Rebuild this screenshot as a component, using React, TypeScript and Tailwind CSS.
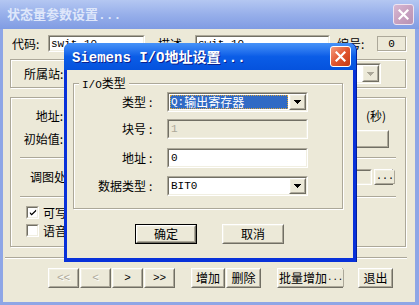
import React from "react";

const MONO = "font-['Liberation_Mono','Noto_Sans_CJK_SC',monospace]";

function Raised({
  className = "",
  children,
  isDefault = false,
}: {
  className?: string;
  children?: React.ReactNode;
  isDefault?: boolean;
}) {
  const inner = (
    <div className="flex h-full w-full border border-t-white border-l-white border-r-[#716f64] border-b-[#716f64]">
      <div className="flex flex-1 items-center justify-center whitespace-nowrap border border-t-[#f1efe2] border-l-[#f1efe2] border-r-[#aca899] border-b-[#aca899] bg-[#ece9d8] leading-[14px]">
        {children}
      </div>
    </div>
  );
  if (isDefault) return <div className={`flex border border-black ${className}`}>{inner}</div>;
  return <div className={`flex ${className}`}>{inner}</div>;
}

function Sunken({
  className = "",
  inner = "bg-white",
  children,
}: {
  className?: string;
  inner?: string;
  children?: React.ReactNode;
}) {
  return (
    <div className={`flex border border-t-[#aca899] border-l-[#aca899] border-r-white border-b-white ${className}`}>
      <div
        className={`flex flex-1 min-w-0 items-center overflow-hidden border border-t-[#716f64] border-l-[#716f64] border-r-[#f1efe2] border-b-[#f1efe2] ${inner}`}
      >
        {children}
      </div>
    </div>
  );
}

function Arrow({ color = "#000" }: { color?: string }) {
  return (
    <svg width="7" height="4" viewBox="0 0 7 4" shapeRendering="crispEdges">
      <path d="M0 0h7v1H0zM1 1h5v1H1zM2 2h3v1H2zM3 3h1v1H3z" fill={color} />
    </svg>
  );
}

function CloseBtn({ active }: { active?: boolean }) {
  return (
    <div
      className={`flex h-[21px] w-[21px] items-center justify-center rounded-[3px] border ${
        active
          ? "border-white bg-linear-to-br from-[#f39a7c] via-[#e2562f] to-[#c53a12]"
          : "border-[#eee4f0] bg-linear-to-br from-[#d8b8d2] via-[#c7a1c0] to-[#b893b4]"
      }`}
    >
      <svg width="11" height="11" viewBox="0 0 11 11">
        <path d="M1.5 1.5l8 8M9.5 1.5l-8 8" stroke="white" strokeWidth="2.2" strokeLinecap="square" />
      </svg>
    </div>
  );
}

function Etched() {
  return <div className="h-[2px] border-t border-t-[#aca899] border-b border-b-white" />;
}

function Check({ checked }: { checked?: boolean }) {
  return (
    <Sunken className="h-[13px] w-[13px]">
      {checked && (
        <svg width="9" height="9" viewBox="0 0 9 9" className="ml-px">
          <path d="M1 4l2 2 5-5v2L3 8 1 6z" fill="#000" />
        </svg>
      )}
    </Sunken>
  );
}

function Colon() {
  return <span className="inline-block w-[12px] pl-[3px] text-left">:</span>;
}

export default function App() {
  return (
    <div className="relative h-[305px] w-[419px] overflow-hidden bg-[#ece9d8] text-[12px] text-black font-['Noto_Sans_CJK_SC',sans-serif] select-none">
      {/* inactive parent title */}
      <div className="flex h-[29px] items-center justify-between bg-linear-to-b from-[#b4c7f2] via-[#97afea] to-[#809ce3] pl-[7px] pr-[5px]">
        <span className={`pt-[2px] text-[13px] font-bold leading-[16px] text-[#dfe7fa] ${MONO}`}>状态量参数设置...</span>
        <CloseBtn />
      </div>

      <div className="flex h-[276px] flex-col border-b-[3px] border-l-[3px] border-r-[4px] border-[#8ea6e6]">
        {/* code / desc / number */}
        <div className="mt-[6px] flex h-[17px] items-center pl-[9px] leading-[14px]">
          <span className="w-[36px]">代码:</span>
          <Sunken className="h-[17px] w-[97px]">
            <span className={`pl-[1px] text-[11px] ${MONO}`}>swit_10</span>
          </Sunken>
          <span className="ml-[13px] w-[37px]">描述</span>
          <Sunken className="h-[17px] w-[135px]">
            <span className={`pl-[1px] text-[11px] ${MONO}`}>swit_10</span>
          </Sunken>
          <span className="ml-[7px] w-[40px]">编号:</span>
          <div className="flex h-[15px] w-[29px] items-center justify-center border border-[#aca899] shadow-[1px_1px_0_#fff]">
            <span className={`text-[11px] ${MONO}`}>0</span>
          </div>
        </div>

        {/* station */}
        <div className="ml-[7px] mt-[7px] flex h-[29px] w-[396px] items-center border border-[#aca899] shadow-[inset_1px_1px_0_#fff,1px_1px_0_#fff] leading-[14px]">
          <span className="pl-[13px]">所属站:</span>
          <Sunken className="ml-auto mr-[24px] h-[21px] w-[300px]" inner="bg-white justify-end">
            <Raised className="h-full w-[17px]">
              <Arrow color="#aca899" />
            </Raised>
          </Sunken>
        </div>

        {/* main panel */}
        <div className="ml-[7px] mt-[9px] flex h-[150px] w-[396px] flex-col border border-[#aca899] shadow-[inset_1px_1px_0_#fff,1px_1px_0_#fff] leading-[14px]">
          <div className="mt-[10px] flex h-[16px] items-center">
            <span className="w-[52px] text-right">地址:</span>
            <Sunken className="ml-auto h-[16px] w-[100px]" />
            <span className="ml-[9px] mr-[19px] w-[20px] whitespace-nowrap">(秒)</span>
          </div>
          <div className="mt-[6px] flex h-[18px] items-center">
            <span className="w-[52px] text-right">初始值:</span>
            <Raised className="ml-auto mr-[16px] h-[18px] w-[100px]" />
          </div>
          <div className="mx-[9px] mt-[9px]">
            <Etched />
          </div>
          <div className="mt-[10px] flex h-[16px] items-center">
            <span className="pl-[19px]">调图处理:</span>
            <Sunken className="ml-auto h-[16px] w-[100px]" inner="bg-[#ece9d8]" />
            <Raised className="ml-[2px] mr-[12px] h-[16px] w-[19px]">
              <span className={`text-[10px] leading-[10px] ${MONO}`}>...</span>
            </Raised>
          </div>
          <div className="mx-[9px] mt-[11px]">
            <Etched />
          </div>
          <div className="mt-[8px] flex h-[13px] items-center pl-[15px]">
            <Check checked />
            <span className="ml-[4px]">可写</span>
          </div>
          <div className="mt-[5px] flex h-[13px] items-center pl-[15px]">
            <Check />
            <span className="ml-[4px]">语音报警</span>
          </div>
        </div>

        <div className="ml-[2px] mt-[10px] w-[402px]">
          <Etched />
        </div>

        {/* bottom buttons */}
        <div className="mt-[9px] flex h-[20px] items-center">
          <div className="ml-[45px] flex gap-px">
            {["<<", "<", ">", ">>"].map((t, i) => (
              <Raised key={t} className="h-[20px] w-[31px]">
                <span
                  className={`text-[11px] ${MONO} ${
                    i < 2 ? "text-[#aca899] [text-shadow:1px_1px_0_#fff]" : "text-black"
                  }`}
                >
                  {t}
                </span>
              </Raised>
            ))}
          </div>
          <Raised className="ml-[16px] h-[20px] w-[34px]">增加</Raised>
          <Raised className="ml-px h-[20px] w-[35px]">删除</Raised>
          <Raised className="ml-[16px] h-[20px] w-[66px]">
            批量增加<span className={`text-[9px] ${MONO}`}>...</span>
          </Raised>
          <Raised className="ml-[15px] h-[20px] w-[35px]">退出</Raised>
        </div>
      </div>

      {/* active child dialog */}
      <div className="absolute left-[64px] top-[43px] flex h-[219px] w-[292px] flex-col rounded-t-[7px] bg-[#0831d9] shadow-[1px_0_0_#001ea0]">
        <div className="flex h-[27px] items-center justify-between rounded-t-[7px] bg-linear-to-b from-[#4692f8] via-[#0b5de7] to-[#0552dd] pl-[8px] pr-[5px]">
          <span
            className={`pt-[2px] text-[14px] font-bold leading-[16px] text-white [text-shadow:1px_1px_0_#0a1f8f] ${MONO}`}
          >
            Siemens I/O地址设置...
          </span>
          <CloseBtn active />
        </div>
        <div className="flex flex-1 flex-col border-b-[4px] border-l-[3px] border-r-[3px] border-[#0831d9] bg-[#ece9d8] leading-[14px]">
          <div className="relative ml-[6px] mt-[13px] flex h-[126px] w-[270px] flex-col border border-[#aca899] shadow-[inset_1px_1px_0_#fff,1px_1px_0_#fff]">
            <span className="absolute -top-[8px] left-[5px] bg-[#ece9d8] px-[3px]">
              <span className={`text-[11px] ${MONO}`}>I/O</span>类型
            </span>

            <div className="mt-[8px] flex h-[20px] items-center">
              <div className="w-[84px] text-right">
                类型
                <Colon />
              </div>
              <Sunken className="ml-[9px] h-[20px] w-[141px]">
                <div className="m-px flex h-[14px] flex-1 items-center border border-dotted border-[#d9a53c] bg-[#316ac5] text-white">
                  <span className={`text-[11px] ${MONO}`}>Q:</span>输出寄存器
                </div>
                <Raised className="h-full w-[17px]">
                  <Arrow />
                </Raised>
              </Sunken>
            </div>

            <div className="mt-[7px] flex h-[20px] items-center">
              <div className="w-[84px] text-right">
                块号
                <Colon />
              </div>
              <Sunken className="ml-[9px] h-[20px] w-[141px]" inner="bg-[#ece9d8]">
                <span className={`pl-[2px] text-[11px] text-[#aca899] ${MONO}`}>1</span>
              </Sunken>
            </div>

            <div className="mt-[9px] flex h-[20px] items-center">
              <div className="w-[84px] text-right">
                地址
                <Colon />
              </div>
              <Sunken className="ml-[9px] h-[20px] w-[141px]">
                <span className={`pl-[2px] text-[11px] ${MONO}`}>0</span>
              </Sunken>
            </div>

            <div className="mt-[8px] flex h-[20px] items-center">
              <div className="w-[84px] text-right">
                数据类型
                <Colon />
              </div>
              <Sunken className="ml-[9px] h-[20px] w-[141px]">
                <span className={`flex-1 pl-[2px] text-[11px] ${MONO}`}>BIT0</span>
                <Raised className="h-full w-[17px]">
                  <Arrow />
                </Raised>
              </Sunken>
            </div>
          </div>

          <div className="mt-[15px] flex h-[20px] items-center">
            <Raised isDefault className="ml-[68px] h-[20px] w-[62px]">
              确定
            </Raised>
            <Raised className="ml-[25px] h-[20px] w-[62px]">取消</Raised>
          </div>
        </div>
      </div>
    </div>
  );
}
